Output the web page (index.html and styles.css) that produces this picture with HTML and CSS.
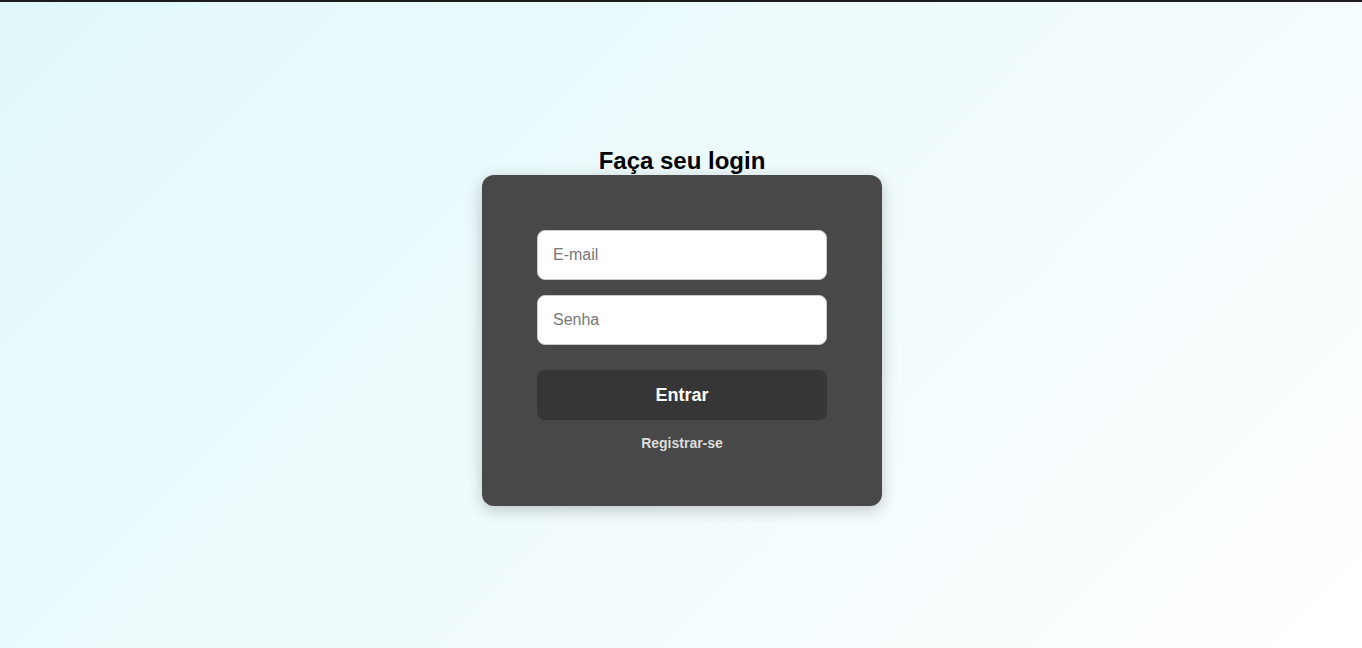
FILE: index.html
```html
<!DOCTYPE html>
<html lang="pt-BR">
<head>
<meta charset="utf-8">
<title>Login</title>
<link rel="stylesheet" href="styles.css">
</head>
<body>
  <main class="wrap">
    <h2 class="title">Faça seu login</h2>
    <form class="card">
      <input class="field" type="email" placeholder="E-mail">
      <input class="field field-pass" type="password" placeholder="Senha">
      <button class="btn" type="button">Entrar</button>
      <a class="link" href="#">Registrar-se</a>
    </form>
  </main>
</body>
</html>
```
FILE: styles.css
```css
* { box-sizing: border-box; }
html, body { margin: 0; height: 100%; }
body {
  border-top: 2px solid #1c1c1c;
  background: linear-gradient(135deg, #e0f7fa 0%, #ffffff 100%);
  font-family: "Liberation Sans", Arial, sans-serif;
  min-height: 100vh;
}
.wrap {
  height: 100%;
  padding: 3px 0 0 2px;
  display: flex;
  flex-direction: column;
  align-items: center;
  justify-content: center;
}
.title {
  margin: 0;
  font-size: 24px;
  line-height: 28px;
  font-weight: bold;
  color: #000;
}
.card {
  width: 400px;
  padding: 55px;
  background: #484848;
  border-radius: 12px;
  box-shadow: 0 4px 16px rgba(0, 0, 0, 0.22);
  display: flex;
  flex-direction: column;
  align-items: center;
}
.field {
  width: 290px;
  height: 50px;
  padding: 0 15px;
  border: 1px solid #cccccc;
  border-radius: 8px;
  background: #fff;
  font-family: "Liberation Sans", Arial, sans-serif;
  font-size: 16px;
  color: #333;
  outline: none;
}
.field::placeholder { color: #777; }
.field-pass { margin-top: 15px; }
.btn {
  margin-top: 25px;
  width: 290px;
  height: 50px;
  border: none;
  border-radius: 8px;
  background: #363636;
  color: #fff;
  font-family: "Liberation Sans", Arial, sans-serif;
  font-size: 18px;
  font-weight: bold;
}
.link {
  margin-top: 15px;
  font-size: 14px;
  line-height: 16px;
  font-weight: bold;
  color: #dddddd;
  text-decoration: none;
}
```
